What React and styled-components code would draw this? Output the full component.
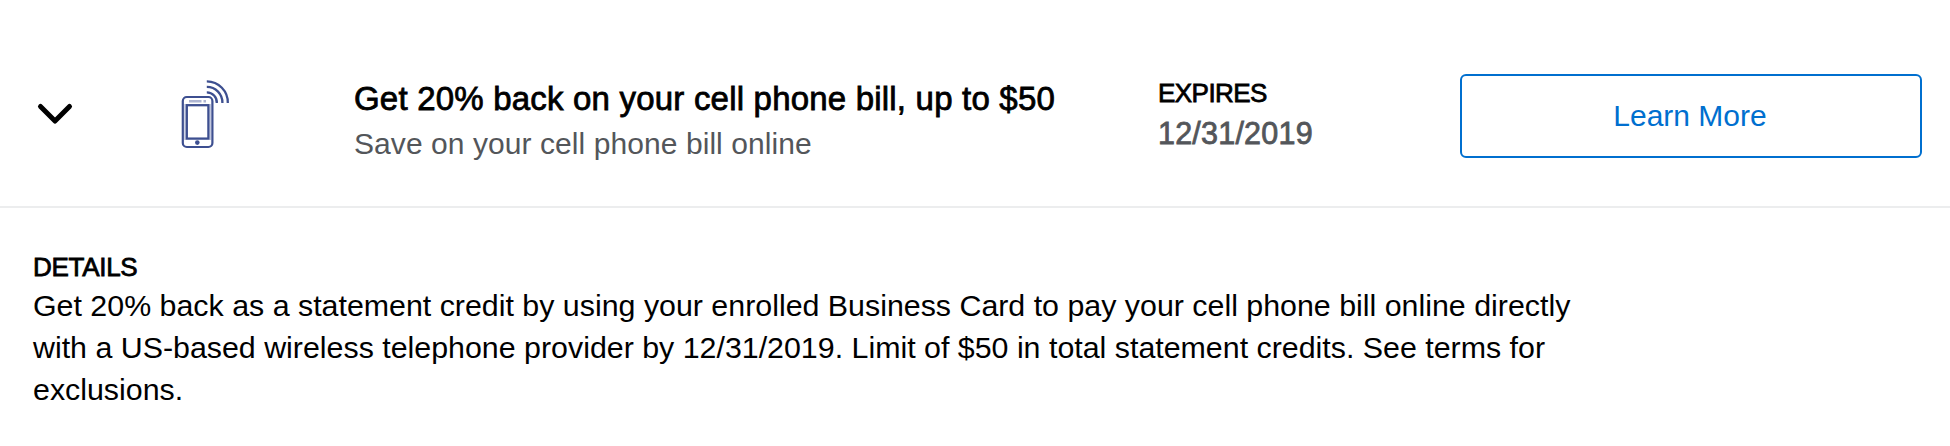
import React from 'react';
import styled, { createGlobalStyle } from 'styled-components';

const Global = createGlobalStyle`
  * { box-sizing: border-box; }
  body {
    margin: 0;
    background: #fff;
    color: #000;
    font-family: "Liberation Sans", Arial, Helvetica, sans-serif;
  }
`;

const Offer = styled.article`
  width: 100%;
  height: 446px;
  background: #fff;
`;

const Header = styled.header`
  display: grid;
  grid-template-columns: 170px 184px 804px 302px 462px;
  align-items: start;
  height: 208px;
  padding-top: 73px;
  border-bottom: 2px solid #ecedee;
`;

const Toggle = styled.button`
  display: block;
  width: 44px;
  height: 30px;
  margin: 26px 0 0 33px;
  padding: 0;
  border: 0;
  background: none;
  svg { display: block; }
`;

const OfferIcon = styled.div`
  padding: 2px 0 0 6px;
  svg { display: block; }
`;

const Summary = styled.div`
  padding-top: 3px;
  white-space: nowrap;
`;

const Title = styled.h2`
  margin: 0;
  font-size: 33px;
  line-height: 45px;
  font-weight: 400;
  letter-spacing: 0.2px;
  -webkit-text-stroke: 0.8px currentColor;
`;

const Subtitle = styled.p`
  margin: 0;
  font-size: 30px;
  line-height: 45px;
  letter-spacing: 0.07px;
  color: #53565a;
`;

const Label = styled.h3`
  margin: 0;
  font-size: 26px;
  line-height: ${(p) => p.$line}px;
  font-weight: 400;
  letter-spacing: ${(p) => p.$tracking}px;
  -webkit-text-stroke: 0.8px currentColor;
`;

const ExpiryDate = styled.div`
  font-size: 30.5px;
  line-height: 41px;
  letter-spacing: 0.22px;
  color: #53565a;
  -webkit-text-stroke: 0.8px currentColor;
`;

const LearnMore = styled.button`
  height: 84px;
  margin-top: 1px;
  padding: 0 2px 0 0;
  border: 2px solid #006fcf;
  border-radius: 6px;
  background: #fff;
  color: #006fcf;
  font: 30px/40px "Liberation Sans", Arial, Helvetica, sans-serif;
`;

const Details = styled.section`
  padding: 41px 0 0 33px;
`;

const DetailsText = styled.p`
  width: 1560px;
  margin: 0;
  font-size: 30.36px;
  line-height: 42px;
`;

function Chevron() {
  return (
    <svg width="44" height="30" viewBox="33 99 44 30" fill="none" stroke="#000" strokeWidth="5" strokeLinecap="round" strokeLinejoin="round">
      <path d="M40.5 106.5 55 121l14.5-14.5" />
    </svg>
  );
}

function PhoneIcon() {
  return (
    <svg width="56" height="76" viewBox="176 75 56 76" fill="none" stroke="#3d4f90" strokeWidth="2.2">
      <rect x="182.8" y="97" width="29.6" height="50" rx="4" />
      <path d="M185 104v36M210.2 104v36" stroke="#b4bbd6" strokeWidth="1.2" />
      <rect x="186.8" y="105.2" width="21.6" height="33.4" strokeWidth="2.3" />
      <path d="M189 101.2h12.5M203.5 101.2h2.5" stroke="#aeb5d2" strokeWidth="2.6" />
      <circle cx="197.3" cy="142.6" r="2.3" fill="#3d4f90" stroke="none" />
      <path d="M206.8 92.4a10 10 0 0 1 10 10.6M206.8 86.9a15.6 15.6 0 0 1 15.6 16.1M206.8 81.4a21 21 0 0 1 21 21.6" strokeWidth="2.3" />
    </svg>
  );
}

export default function App() {
  return (
    <>
      <Global />
      <Offer>
        <Header>
          <Toggle aria-label="Collapse offer"><Chevron /></Toggle>
          <OfferIcon><PhoneIcon /></OfferIcon>
          <Summary>
            <Title>Get 20% back on your cell phone bill, up to $50</Title>
            <Subtitle>Save on your cell phone bill online</Subtitle>
          </Summary>
          <div>
            <Label $line={40} $tracking={-0.55}>EXPIRES</Label>
            <ExpiryDate>12/31/2019</ExpiryDate>
          </div>
          <LearnMore>Learn More</LearnMore>
        </Header>
        <Details>
          <Label $line={36} $tracking={-0.3}>DETAILS</Label>
          <DetailsText>
            Get 20% back as a statement credit by using your enrolled Business Card to pay your cell phone bill online directly
            with a US-based wireless telephone provider by 12/31/2019. Limit of $50 in total statement credits. See terms for
            exclusions.
          </DetailsText>
        </Details>
      </Offer>
    </>
  );
}
